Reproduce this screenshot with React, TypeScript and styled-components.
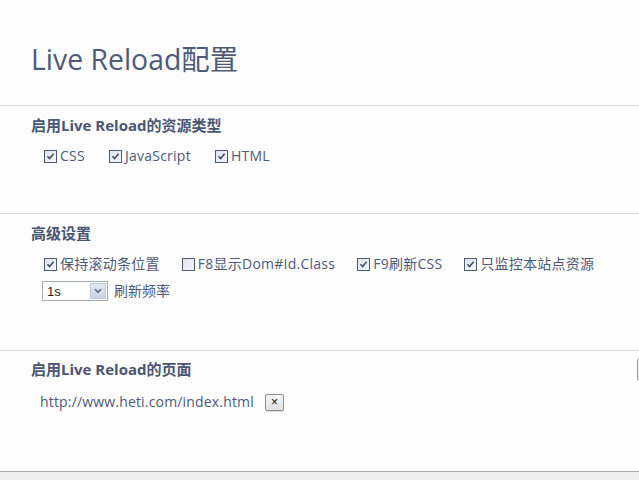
import React from "react";
import styled, { createGlobalStyle } from "styled-components";

const Global = createGlobalStyle`
  html, body { margin: 0; padding: 0; background: #fdfdfd; overflow: hidden; }
  body { font-family: "Open Sans", "Noto Sans CJK SC", sans-serif; color: #4e5a77; }
`;

const Page = styled.div`
  position: relative;
  width: 639px;
  height: 480px;
  display: flex;
  flex-direction: column;
  background: #fdfdfd;
  overflow: hidden;
`;

const Header = styled.header`
  height: 105px;
  box-sizing: border-box;
  padding: 39px 0 0 31px;
`;

const Title = styled.h1`
  margin: 0;
  font-size: 28.4px;
  font-weight: normal;
  line-height: 40px;
  color: #4e5a77;
`;

const Section = styled.section<{ $h: number; $pt?: number }>`
  position: relative;
  height: ${(p) => p.$h}px;
  box-sizing: border-box;
  border-top: 1px solid #d9d9d9;
  padding: ${(p) => p.$pt ?? 9}px 0 0 31px;
  display: flex;
  flex-direction: column;
`;

const Heading = styled.h2`
  margin: 0;
  font-size: 15px;
  font-weight: bold;
  line-height: 20px;
  color: #4a5673;
`;

const Row = styled.div<{ $mt: number; $pl?: number; $gap?: number }>`
  display: flex;
  align-items: center;
  gap: ${(p) => p.$gap ?? 24}px;
  margin-top: ${(p) => p.$mt}px;
  padding-left: ${(p) => p.$pl ?? 13}px;
  height: 20px;
`;

const Label = styled.label`
  display: flex;
  align-items: center;
  gap: 3px;
  font-size: 14px;
  letter-spacing: 0.25px;
  line-height: 20px;
  white-space: nowrap;
  color: #4e5a77;
`;

const Box = styled.span`
  box-sizing: border-box;
  width: 13px;
  height: 13px;
  border: 1px solid #4c5a72;
  background: linear-gradient(135deg, #dfe3ea 0%, #f6f7f9 100%);
  display: inline-flex;
  align-items: center;
  justify-content: center;
`;

const Check = ({ checked }: { checked: boolean }) => (
  <Box>
    {checked && (
      <svg width="9" height="9" viewBox="0 0 9 9">
        <path d="M1.5 4.3 L3.6 6.6 L7.6 1.8" fill="none" stroke="#40506c" strokeWidth="1.6" />
      </svg>
    )}
  </Box>
);

const Select = styled.div`
  box-sizing: border-box;
  width: 66px;
  height: 20px;
  border: 1px solid #a3abb6;
  background: #fff;
  display: flex;
  align-items: center;
  justify-content: space-between;
  padding: 0 1px 0 4px;
  font-family: "Liberation Sans", sans-serif;
  font-size: 13px;
  color: #222;
`;

const Arrow = styled.span`
  box-sizing: border-box;
  width: 16px;
  height: 16px;
  background: linear-gradient(#e3e9f3, #c9d3e3);
  border: 1px solid #c2cbd9;
  display: flex;
  align-items: center;
  justify-content: center;
`;

const Caption = styled.span`
  font-size: 14px;
  line-height: 20px;
`;

const Url = styled.span`
  font-size: 14px;
  letter-spacing: 0.17px;
  line-height: 20px;
  color: #4e5a77;
`;

const XButton = styled.button`
  box-sizing: border-box;
  width: 19px;
  height: 17px;
  padding: 0;
  border: 1px solid #8e8e8e;
  border-radius: 2px;
  background: linear-gradient(#f6f6f6, #e2e2e2);
  box-shadow: 0 1px 1px rgba(0, 0, 0, 0.15);
  display: flex;
  align-items: center;
  justify-content: center;
  font-family: "Liberation Sans", sans-serif;
  font-size: 12px;
  color: #111;
`;

const EdgeButton = styled.div`
  position: absolute;
  top: 7px;
  right: -40px;
  width: 42px;
  height: 23px;
  box-sizing: border-box;
  border: 1px solid #9a9a9a;
  border-radius: 3px;
  background: linear-gradient(#f6f6f6, #e4e4e4);
`;

const Footer = styled.footer`
  flex: 1;
  border-top: 1px solid #a9a9a9;
  background: #ededed;
`;

export default function App() {
  return (
    <Page>
      <Global />
      <Header>
        <Title>Live Reload配置</Title>
      </Header>
      <Section $h={108}>
        <Heading>启用Live Reload的资源类型</Heading>
        <Row $mt={11}>
          <Label><Check checked />CSS</Label>
          <Label><Check checked />JavaScript</Label>
          <Label><Check checked />HTML</Label>
        </Row>
      </Section>
      <Section $h={137}>
        <Heading>高级设置</Heading>
        <Row $mt={11} $gap={22}>
          <Label><Check checked />保持滚动条位置</Label>
          <Label><Check checked={false} />F8显示Dom#Id.Class</Label>
          <Label><Check checked />F9刷新CSS</Label>
          <Label><Check checked />只监控本站点资源</Label>
        </Row>
        <Row $mt={7} $pl={11} $gap={6}>
          <Select>
            1s
            <Arrow>
              <svg width="8" height="6" viewBox="0 0 8 6">
                <path d="M1 1.2 L4 4.2 L7 1.2" fill="none" stroke="#4d5f80" strokeWidth="1.6" />
              </svg>
            </Arrow>
          </Select>
          <Caption>刷新频率</Caption>
        </Row>
      </Section>
      <Section $h={121} $pt={8}>
        <EdgeButton />
        <Heading>启用Live Reload的页面</Heading>
        <Row $mt={13} $pl={9} $gap={11}>
          <Url>http://www.heti.com/index.html</Url>
          <XButton>×</XButton>
        </Row>
      </Section>
      <Footer />
    </Page>
  );
}
